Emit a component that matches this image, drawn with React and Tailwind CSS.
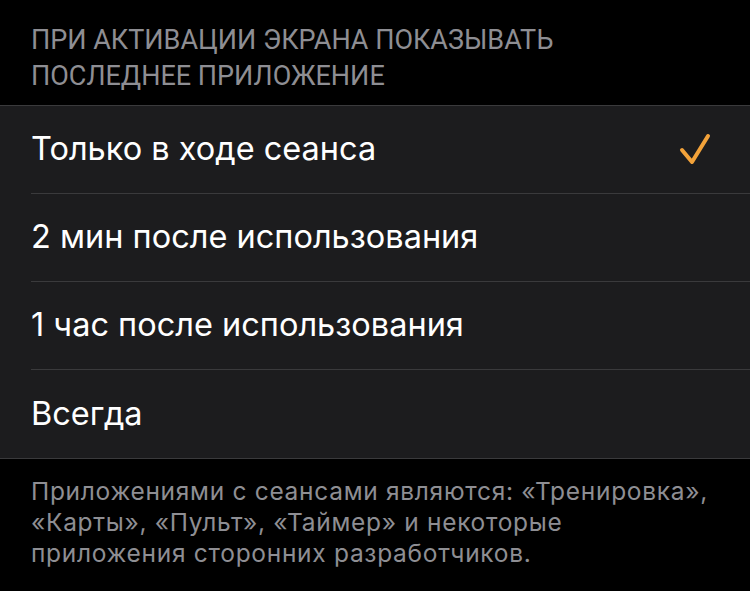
import React from 'react';

const options = [
  { id: 'session', label: 'Только в ходе сеанса', checked: true },
  { id: '2min', label: '2 мин после использования' },
  { id: '1hour', label: '1 час после использования' },
  { id: 'always', label: 'Всегда' },
];

function Check() {
  return (
    <svg width="34" height="34" viewBox="0 0 34 34" fill="none" className="shrink-0">
      <path
        d="M3 17 L13 29 L29 3"
        stroke="#f2a23a"
        strokeWidth="4"
        strokeLinecap="round"
        strokeLinejoin="round"
      />
    </svg>
  );
}

export default function App() {
  return (
    <div className="w-[750px] h-[591px] bg-black overflow-hidden">
      {/* заголовок секции */}
      <div
        className="pt-[22px] pb-[11px] pl-[31px] text-[27px] leading-[36px] text-[#8e8e93]"
        style={{ fontFamily: 'Roboto, "Noto Sans", sans-serif' }}
      >
        <div className="whitespace-nowrap">ПРИ АКТИВАЦИИ ЭКРАНА ПОКАЗЫВАТЬ</div>
        <div className="whitespace-nowrap">ПОСЛЕДНЕЕ ПРИЛОЖЕНИЕ</div>
      </div>

      {/* список вариантов */}
      <div className="bg-[#1c1c1e] border-y border-[#3a3a3c]">
        {options.map((o, i) => (
          <div key={o.id} className="pl-[31px]">
            <div
              className={`h-[88px] flex items-center pr-[37px] ${
                i < options.length - 1 ? 'border-b border-[#3a3a3c]' : ''
              }`}
            >
              <span
                className="flex-1 text-[32.5px] text-white"
                style={{ fontFamily: 'Inter, "Noto Sans", sans-serif' }}
              >
                {o.label}
              </span>
              {o.checked && <Check />}
            </div>
          </div>
        ))}
      </div>

      {/* пояснение */}
      <div
        className="pt-[17px] pl-[31px] text-[24.5px] leading-[31px] tracking-[0.7px] text-[#8e8e93]"
        style={{ fontFamily: 'Inter, "Noto Sans", sans-serif' }}
      >
        <div className="whitespace-nowrap">Приложениями с сеансами являются: «Тренировка»,</div>
        <div className="whitespace-nowrap">«Карты», «Пульт», «Таймер» и некоторые</div>
        <div className="whitespace-nowrap">приложения сторонних разработчиков.</div>
      </div>
    </div>
  );
}
